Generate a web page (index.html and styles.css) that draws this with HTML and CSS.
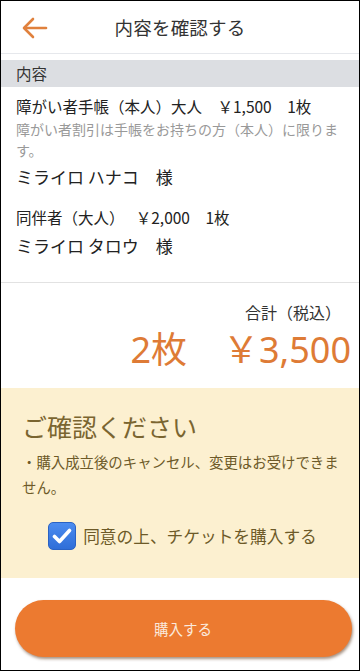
FILE: index.html
```html
<!DOCTYPE html>
<html lang="ja">
<head>
<meta charset="utf-8">
<title>内容を確認する</title>
<link rel="stylesheet" href="styles.css">
</head>
<body>
<div class="page">
  <header class="topbar">
    <div class="back">
      <svg width="26" height="22" viewBox="0 0 26 22" fill="none" stroke="#e0813d" stroke-width="2.6" stroke-linecap="round" stroke-linejoin="round">
        <path d="M24 11H3"/>
        <path d="M11 2L2 11l9 9"/>
      </svg>
    </div>
    <h1 class="title">内容を確認する</h1>
    <div></div>
  </header>

  <div class="section-head">内容</div>

  <div class="items">
    <div class="item">
      <p class="item-line">障がい者手帳（本人）大人　￥1,500　1枚</p>
      <p class="item-note">障がい者割引は手帳をお持ちの方（本人）に限ります。</p>
      <p class="item-name">ミライロ ハナコ　様</p>
    </div>
    <div class="item">
      <p class="item-line">同伴者（大人）　 ￥2,000　1枚</p>
      <p class="item-name">ミライロ タロウ　様</p>
    </div>
  </div>

  <div class="total">
    <p class="total-label">合計（税込）</p>
    <p class="total-value">2枚　￥3,500</p>
  </div>

  <div class="confirm">
    <h2 class="confirm-title">ご確認ください</h2>
    <p class="confirm-text">・購入成立後のキャンセル、変更はお受けできません。</p>
    <label class="agree">
      <span class="checkbox">
        <svg width="20" height="16" viewBox="0 0 20 16" fill="none" stroke="#fff" stroke-width="3.6" stroke-linecap="round" stroke-linejoin="round">
          <path d="M2.5 8.5l5 5L17.5 2.5"/>
        </svg>
      </span>
      <span class="agree-text">同意の上、チケットを購入する</span>
    </label>
  </div>

  <div class="actions">
    <button class="buy">購入する</button>
  </div>
</div>
</body>
</html>
```

FILE: styles.css
```css
* { box-sizing: border-box; }
html, body { margin: 0; padding: 0; }
body {
  font-family: "Noto Sans CJK JP", "Noto Sans", sans-serif;
  background: #fff;
  color: #222;
}
p, h1, h2 { margin: 0; font-weight: normal; }

.page {
  width: 360px;
  height: 671px;
  border: 1.5px solid #000;
  display: flex;
  flex-direction: column;
  overflow: hidden;
}

.topbar {
  height: 53px;
  display: grid;
  grid-template-columns: 60px 1fr 60px;
  align-items: center;
  border-bottom: 1px solid #e6e8ec;
  flex: none;
}
.back { padding-left: 21px; padding-top: 2px; display: flex; }
.title {
  text-align: center;
  font-size: 18.5px;
  color: #333;
  letter-spacing: 0.2px;
}

.section-head {
  margin-top: 6px;
  height: 27px;
  background: #dcdee2;
  font-size: 15.5px;
  line-height: 27px;
  padding-left: 15px;
  color: #333;
  flex: none;
}

.items {
  padding: 7px 15px 0;
  height: 196px;
  border-bottom: 1px solid #e2e2e2;
  flex: none;
}
.item-line { font-size: 15.5px; line-height: 25px; }
.item-note { font-size: 14px; line-height: 21px; color: #999; }
.item-name { font-size: 17px; line-height: 26px; margin-top: 3px; }
.item + .item { margin-top: 15px; }

.total {
  padding: 16px 8px 0 0;
  text-align: right;
  height: 105px;
  flex: none;
}
.total-label { font-size: 16px; line-height: 26px; color: #333; padding-right: 10px; }
.total-value {
  font-size: 36px;
  line-height: 50px;
  color: #de7b36;
  font-family: "Noto Sans", "Noto Sans CJK JP", sans-serif;
}

.confirm {
  background: #fcf0d0;
  height: 190px;
  padding: 22px 14px 0 21px;
  color: #7a6530;
  flex: none;
}
.confirm-title { font-size: 25px; line-height: 32px; letter-spacing: 0; }
.confirm-text { font-size: 14.4px; line-height: 25px; margin-top: 7px; color: #6d5a28; }
.agree {
  display: flex;
  align-items: center;
  justify-content: center;
  gap: 7px;
  margin-top: 23px;
  padding-right: 2px;
}
.checkbox {
  width: 28px;
  height: 28px;
  border-radius: 5px;
  background: linear-gradient(#4c8cf0, #2f6ed8);
  border: 1px solid #2a62c4;
  display: flex;
  align-items: center;
  justify-content: center;
}
.agree-text { font-size: 16.7px; color: #6d5a28; }

.actions {
  padding: 22px 0 0 13.5px;
}
.buy {
  width: 337px;
  height: 57px;
  border: none;
  border-radius: 29px;
  background: #ec7a30;
  color: #fbe9dc;
  font-family: "Noto Sans CJK JP", sans-serif;
  font-size: 14.5px;
  box-shadow: 1px 2px 3px rgba(80, 40, 10, 0.5);
}
```
